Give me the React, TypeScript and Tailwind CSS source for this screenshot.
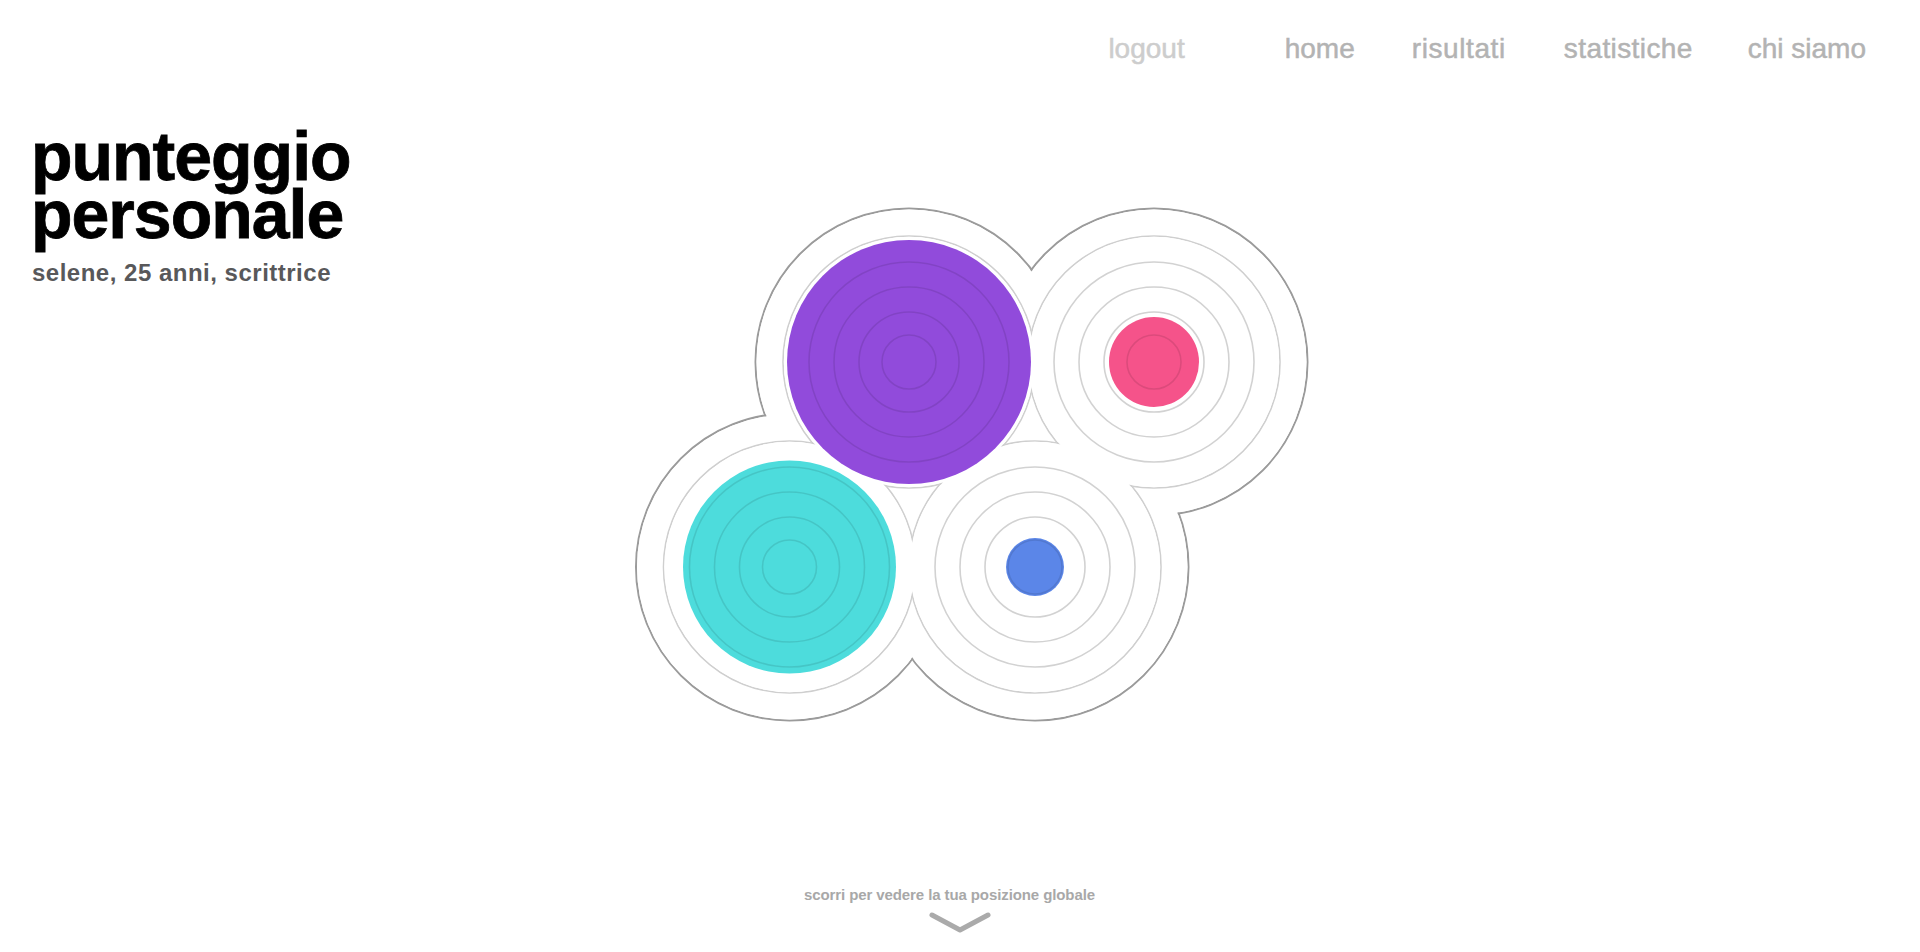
import React from "react";

type Node = { cx: number; cy: number; r: number; color: string };

const OX = 620;
const OY = 100;
const nodes: Node[] = [
  { cx: 909 - OX, cy: 362 - OY, r: 122, color: "#914bdb" },
  { cx: 1154 - OX, cy: 362 - OY, r: 45, color: "#f5538a" },
  { cx: 789.5 - OX, cy: 567 - OY, r: 106.5, color: "#4ddcdc" },
  { cx: 1035 - OX, cy: 567 - OY, r: 29, color: "#5b86e8" },
];
const rings = [27, 50, 75, 100];

function Chart() {
  return (
    <svg width={700} height={640} viewBox="0 0 700 640" className="block shrink-0">
      {nodes.map((n, i) => (
        <circle key={"o" + i} cx={n.cx} cy={n.cy} r={153.5} fill="none" stroke="#9b9b9b" strokeWidth={2} />
      ))}
      {nodes.map((n, i) => (
        <circle key={"ow" + i} cx={n.cx} cy={n.cy} r={152.5} fill="#ffffff" />
      ))}
      {nodes.map((n, i) => (
        <circle key={"l" + i} cx={n.cx} cy={n.cy} r={126} fill="none" stroke="#cfcfcf" strokeWidth={1.6} />
      ))}
      {nodes.map((n, i) => (
        <circle key={"lw" + i} cx={n.cx} cy={n.cy} r={125.2} fill="#ffffff" />
      ))}
      {nodes.map((n, i) => (
        <g key={"g" + i}>
          {rings.map((r) => (
            <circle key={r} cx={n.cx} cy={n.cy} r={r} fill="none" stroke="#d2d2d2" strokeWidth={1.6} />
          ))}
          <circle cx={n.cx} cy={n.cy} r={n.r} fill={n.color} />
          {rings
            .filter((r) => r < n.r)
            .map((r) => (
              <circle key={"d" + r} cx={n.cx} cy={n.cy} r={r} fill="none" stroke="rgba(0,0,0,0.1)" strokeWidth={1.6} />
            ))}
        </g>
      ))}
    </svg>
  );
}

export default function App() {
  return (
    <div
      className="w-full h-[952px] flex flex-col bg-white overflow-hidden"
      style={{ fontFamily: '"Liberation Sans", Arial, sans-serif' }}
    >
      <header className="h-[100px] shrink-0 flex justify-end items-start pt-[33px] pr-[54px] text-[28px] leading-[32px] text-[#b3b3b3] [-webkit-text-stroke:0.5px_currentColor]">
        <a className="text-[#cdcdcd] mr-[100px]">logout</a>
        <nav className="flex">
          <a>home</a>
          <a className="ml-[57px] tracking-[0.6px]">risultati</a>
          <a className="ml-[58px] tracking-[0.4px]">statistiche</a>
          <a className="ml-[55px]">chi siamo</a>
        </nav>
      </header>
      <main className="flex-1 flex">
        <div className="w-[620px] shrink-0 pl-[32px] pt-[27px]">
          <h1 className="text-[68px] leading-[58px] font-bold tracking-[-1px] text-black -ml-[1px] [-webkit-text-stroke:0.8px_#000]">
            <span className="block">punteggio</span>
            <span className="block">personale</span>
          </h1>
          <p className="mt-[16px] text-[24px] leading-[28px] font-bold text-[#58585a] tracking-[0.5px]">
            selene, 25 anni, scrittrice
          </p>
        </div>
        <Chart />
      </main>
      <footer className="h-[66px] shrink-0 flex flex-col items-center">
        <p className="text-[15px] leading-[18px] font-bold text-[#a8a8a8] pr-[21px] tracking-[-0.1px]">
          scorri per vedere la tua posizione globale
        </p>
        <svg width={64} height={26} viewBox="0 0 64 26" className="mt-[4px]">
          <polyline points="4,7 32,22 60,7" fill="none" stroke="#aaaaaa" strokeWidth={5} strokeLinecap="round" strokeLinejoin="round" />
        </svg>
      </footer>
    </div>
  );
}
